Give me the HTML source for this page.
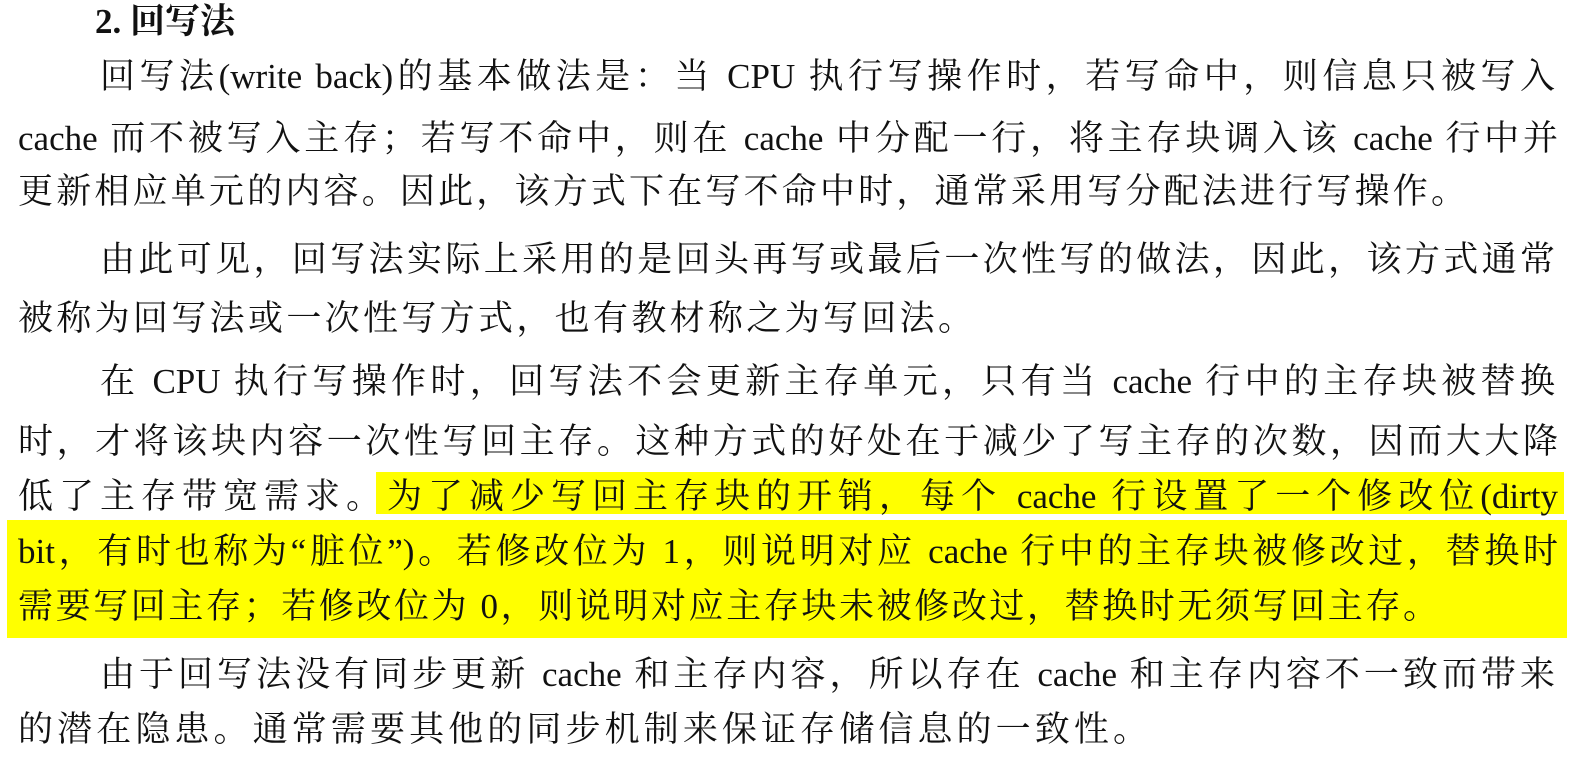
<!DOCTYPE html>
<html><head><meta charset="utf-8"><style>
body{margin:0;width:1576px;height:760px;background:#fff;overflow:hidden;position:relative;font-family:"Liberation Serif","Noto Serif CJK SC",serif;color:#111;}
.l{position:absolute;font-size:35px;line-height:44px;height:44px;white-space:nowrap;text-align:justify;text-align-last:justify;}
.hl{position:absolute;background:#ffff00;}
</style></head><body>
<div class="hl" style="left:376px;top:472px;width:1188px;height:42px"></div>
<div class="hl" style="left:7px;top:520px;width:1560px;height:118px"></div>
<div class="l" style="left:95px;top:0px;font-weight:bold;text-align-last:left">2. 回写法</div>
<div class="l" style="left:100px;top:55px;width:1455px">回写法(write back)的基本做法是：当 CPU 执行写操作时，若写命中，则信息只被写入</div>
<div class="l" style="left:18px;top:117px;width:1540px">cache 而不被写入主存；若写不命中，则在 cache 中分配一行，将主存块调入该 cache 行中并</div>
<div class="l" style="left:18px;top:170px;width:1448px">更新相应单元的内容。因此，该方式下在写不命中时，通常采用写分配法进行写操作。</div>
<div class="l" style="left:100px;top:238px;width:1455px">由此可见，回写法实际上采用的是回头再写或最后一次性写的做法，因此，该方式通常</div>
<div class="l" style="left:18px;top:297px;width:955px">被称为回写法或一次性写方式，也有教材称之为写回法。</div>
<div class="l" style="left:100px;top:360px;width:1455px">在 CPU 执行写操作时，回写法不会更新主存单元，只有当 cache 行中的主存块被替换</div>
<div class="l" style="left:18px;top:420px;width:1540px">时，才将该块内容一次性写回主存。这种方式的好处在于减少了写主存的次数，因而大大降</div>
<div class="l" style="left:18px;top:475px;width:1540px">低了主存带宽需求。为了减少写回主存块的开销，每个 cache 行设置了一个修改位(dirty</div>
<div class="l" style="left:18px;top:530px;width:1540px">bit，有时也称为“脏位”)。若修改位为 1，则说明对应 cache 行中的主存块被修改过，替换时</div>
<div class="l" style="left:18px;top:585px;width:1420px">需要写回主存；若修改位为 0，则说明对应主存块未被修改过，替换时无须写回主存。</div>
<div class="l" style="left:100px;top:653px;width:1455px">由于回写法没有同步更新 cache 和主存内容，所以存在 cache 和主存内容不一致而带来</div>
<div class="l" style="left:18px;top:708px;width:1130px">的潜在隐患。通常需要其他的同步机制来保证存储信息的一致性。</div>
</body></html>
